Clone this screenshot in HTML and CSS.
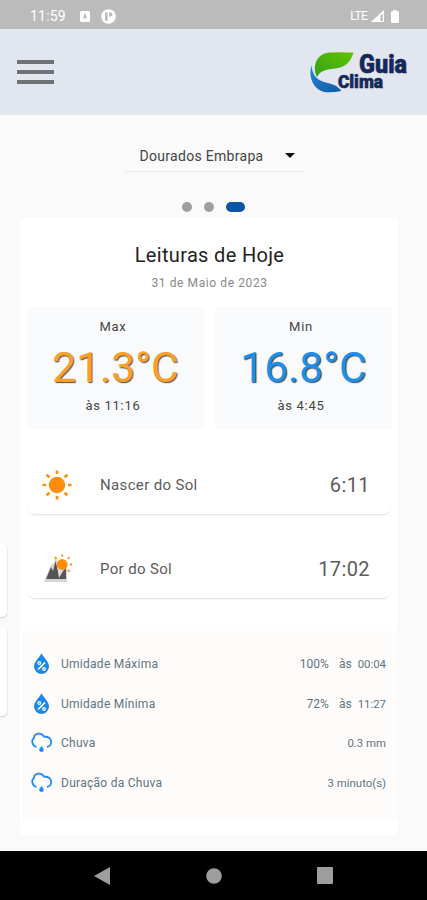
FILE: index.html
```
<!DOCTYPE html>
<html lang="pt-BR">
<head>
    <meta charset="UTF-8">
    <meta name="viewport" content="width=device-width, initial-scale=1.0">
    <title>Guia Clima</title>
    <link rel="stylesheet" href="styles.css">
</head>
<body>
    <div class="status-bar">
        <span class="clock">11:59</span>
        <svg class="status-app" width="10" height="11" viewBox="0 0 10 11">
            <rect width="10" height="11" rx="1.5" fill="#fff"/>
            <path d="M3.5 7.5L5 3.5l1.5 4M4 6.3h2" fill="none" stroke="#bbb" stroke-width="1.2"/>
        </svg>
        <svg class="status-p" width="15" height="15" viewBox="0 0 15 15">
            <circle cx="7.5" cy="7.5" r="7.3" fill="#fff"/>
            <path d="M4 3.5h2.5v8.5H4zM8 3.5h1.5a2 2 0 0 1 0 4H8z" fill="#bbb"/>
        </svg>
        <span class="lte">LTE</span>
        <svg class="signal" width="13" height="12" viewBox="0 0 13 12">
            <path d="M0 12L13 0v12z" fill="#fff"/>
            <path d="M9.5 5.5L11.8 3.4V11H9.5z" fill="#bbb"/>
        </svg>
        <svg class="battery" width="8" height="13" viewBox="0 0 8 13">
            <path d="M2.3 0h3.4v1.3H7q1 0 1 1V12q0 1-1 1H1q-1 0-1-1V2.3q0-1 1-1h1.3z" fill="#fff"/>
        </svg>
    </div>

    <header class="header">
        <div class="menu">
            <span></span>
            <span></span>
            <span></span>
        </div>
        <svg class="logo" width="104" height="60" viewBox="0 -8 104 60">
            <defs>
                <linearGradient id="leaf" x1="0" y1="1" x2="1" y2="0">
                    <stop offset="0" stop-color="#35a01c"/>
                    <stop offset="1" stop-color="#62c400"/>
                </linearGradient>
                <linearGradient id="water" x1="0" y1="0" x2="1" y2="1">
                    <stop offset="0" stop-color="#2b86cf"/>
                    <stop offset="1" stop-color="#0c5ba8"/>
                </linearGradient>
            </defs>
            <path d="M8 27C3 17 7 4 20 2.500Q25 2 44.500 2.500C42 12 36 17.500 26 18.500C16 19.500 11 21 8 27Z" fill="url(#leaf)"/>
            <path d="M2.500 15C-1 27 4 39 15 42Q22 43 32.500 41C27 34 22 34 15 32C6 29 3 23 2.500 15Z" fill="url(#water)"/>
            <text x="50" y="22.500" class="logo-guia" textLength="48" lengthAdjust="spacingAndGlyphs">Guia</text>
            <text x="29" y="37.500" class="logo-clima" textLength="45" lengthAdjust="spacingAndGlyphs">Clima</text>
        </svg>
    </header>

    <main class="content">
        <div class="station">
            <span>Dourados Embrapa</span>
            <svg width="10" height="5" viewBox="0 0 10 5"><path d="M0 0h10L5 5z" fill="#111"/></svg>
        </div>
        <div class="dots">
            <span class="dot"></span>
            <span class="dot"></span>
            <span class="dot active"></span>
        </div>

        <div class="carousel">
            <div class="previous">
                <div class="edge edge-small"></div>
                <div class="edge edge-large"></div>
            </div>
            <section class="slide">
                <h1 class="title">Leituras de Hoje</h1>
                <p class="date">31 de Maio de 2023</p>

                <div class="temps">
                    <div class="temp max">
                        <span class="temp-label">Max</span>
                        <strong>21.3°C</strong>
                        <span class="temp-time">às 11:16</span>
                    </div>
                    <div class="temp min">
                        <span class="temp-label">Min</span>
                        <strong>16.8°C</strong>
                        <span class="temp-time">às 4:45</span>
                    </div>
                </div>

                <div class="sun-row">
                    <svg width="30" height="30" viewBox="0 0 30 30">
                        <circle cx="15" cy="15" r="8.200" fill="#ff8c0a"/>
                        <path d="M15 .5v3.500M15 26v3.500M.5 15H4M26 15h3.500M4.600 4.600l2.800 2.800M22.600 22.600l2.800 2.800M4.600 25.400l2.800-2.800M22.600 7.400l2.800-2.800" stroke="#ff8c0a" stroke-width="2.600"/>
                    </svg>
                    <span class="sun-name">Nascer do Sol</span>
                    <span class="sun-time">6:11</span>
                </div>
                <div class="sun-row">
                    <svg width="30" height="30" viewBox="0 0 30 30">
                        <path d="M2 28L9 11l3-2 1-6 5 9 7 2v14z" fill="#d9d5d3"/>
                        <path d="M4 25l5-12 2 4 2.500-10 3.500 14 7-8v12z" fill="#555"/>
                        <path d="M15 10l2 14 4-7 3-3-5-3z" fill="#e2dfdd"/>
                        <path d="M20 25l4-8v8z" fill="#555"/>
                        <circle cx="20.200" cy="10.500" r="5.400" fill="#ff8c0a"/>
                        <path d="M20.200.5v2M25.800 4.800l1.700-1.700M28 10.500h2M25.800 16l1.700 1.700M14.600 4.800l-1.700-1.700" stroke="#ff8c0a" stroke-width="1.900"/>
                    </svg>
                    <span class="sun-name">Por do Sol</span>
                    <span class="sun-time">17:02</span>
                </div>

                <div class="details">
                    <div class="detail">
                        <svg width="22" height="22" viewBox="0 0 22 22">
                            <path d="M10.500.5C7.500 5.500 3 9 3 13.500a7.500 7.500 0 0 0 15 0C18 9 13.500 5.500 10.500.5z" fill="#1c88e5"/>
                            <path d="M14 9.500l-7 7" stroke="#fff" stroke-width="1.700"/>
                            <circle cx="8.300" cy="10" r="1.300" fill="none" stroke="#fff" stroke-width="1.200"/>
                            <circle cx="13" cy="16" r="1.300" fill="none" stroke="#fff" stroke-width="1.200"/>
                        </svg>
                        <span class="name">Umidade Máxima</span>
                        <span class="percent">100%</span>
                        <span class="as">às</span>
                        <span class="value">00:04</span>
                    </div>
                    <div class="detail">
                        <svg width="22" height="22" viewBox="0 0 22 22">
                            <path d="M10.500.5C7.500 5.500 3 9 3 13.500a7.500 7.500 0 0 0 15 0C18 9 13.500 5.500 10.500.5z" fill="#1c88e5"/>
                            <path d="M14 9.500l-7 7" stroke="#fff" stroke-width="1.700"/>
                            <circle cx="8.300" cy="10" r="1.300" fill="none" stroke="#fff" stroke-width="1.200"/>
                            <circle cx="13" cy="16" r="1.300" fill="none" stroke="#fff" stroke-width="1.200"/>
                        </svg>
                        <span class="name">Umidade Mínima</span>
                        <span class="percent">72%</span>
                        <span class="as">às</span>
                        <span class="value">11:27</span>
                    </div>
                    <div class="detail">
                        <svg width="22" height="22" viewBox="0 0 22 22">
                            <path d="M5.500 15C.5 13.500.3 7.500 3 6C3.500.8 10 .2 13 4.500C18.500 4.500 20.500 7.500 20.200 10.500C20 13 18.500 14.500 16 15" fill="none" stroke="#2488f5" stroke-width="1.800"/>
                            <path d="M10.500 14l2.200 3a2.300 2.300 0 1 1-4.400 0z" fill="#2488f5"/>
                        </svg>
                        <span class="name">Chuva</span>
                        <span class="value">0.3 mm</span>
                    </div>
                    <div class="detail">
                        <svg width="22" height="22" viewBox="0 0 22 22">
                            <path d="M5.500 15C.5 13.500.3 7.500 3 6C3.500.8 10 .2 13 4.500C18.500 4.500 20.500 7.500 20.200 10.500C20 13 18.500 14.500 16 15" fill="none" stroke="#2488f5" stroke-width="1.800"/>
                            <path d="M10.500 14l2.200 3a2.300 2.300 0 1 1-4.400 0z" fill="#2488f5"/>
                        </svg>
                        <span class="name">Duração da Chuva</span>
                        <span class="value">3 minuto(s)</span>
                    </div>
                </div>
            </section>
        </div>
    </main>

    <nav class="nav-bar">
        <svg width="16" height="18" viewBox="0 0 16 18"><path d="M0 9L16 0v18z" fill="#9e9e9e"/></svg>
        <svg width="16" height="16" viewBox="0 0 16 16"><circle cx="8" cy="8" r="7.800" fill="#9e9e9e"/></svg>
        <svg width="16" height="17" viewBox="0 0 16 17"><rect width="16" height="17" rx="1" fill="#9e9e9e"/></svg>
    </nav>
</body>
</html>
```
FILE: styles.css
```
* {
    box-sizing: border-box;
}
body {
    font-family: Roboto, "Liberation Sans", sans-serif;
    margin: 0;
    height: 900px;
    display: flex;
    flex-direction: column;
    background-color: #fafafa;
    overflow: hidden;
}
svg {
    display: block;
    flex: none;
}
.status-bar {
    height: 29px;
    padding: 3px 28px 0 30px;
    display: flex;
    align-items: center;
    background-color: #bbb;
    color: #fff;
}
.clock {
    width: 50px;
    font-size: 14px;
    letter-spacing: 0.2px;
}
.status-p {
    margin-left: 11px;
}
.lte {
    margin-left: auto;
    font-size: 12px;
    letter-spacing: -0.7px;
}
.signal {
    margin-left: 4px;
}
.battery {
    margin-left: 7px;
}
.header {
    height: 86px;
    padding: 0 14px 0 17px;
    display: flex;
    align-items: center;
    justify-content: space-between;
    background-color: #e1e6ef;
}
.menu {
    width: 37px;
    display: flex;
    flex-direction: column;
    gap: 6px;
}
.menu span {
    height: 4px;
    background-color: #707376;
}
.logo text {
    font-family: Roboto, sans-serif;
    font-weight: 900;
    fill: #16285a;
    stroke: #16285a;
    stroke-width: 0.6px;
}
.logo .logo-guia {
    font-size: 26px;
}
.logo .logo-clima {
    font-size: 18px;
}
.content {
    flex: 1;
    padding-top: 26px;
}
.station {
    width: 180px;
    height: 31px;
    margin: 0 auto;
    padding: 0 9px 1px 16px;
    display: flex;
    align-items: center;
    justify-content: space-between;
    border-bottom: 1px solid #ececec;
    font-size: 14px;
    letter-spacing: 0.3px;
    color: #444;
}
.dots {
    margin-top: 30px;
    height: 10px;
    display: flex;
    align-items: center;
    justify-content: center;
    gap: 12.5px;
}
.dot {
    width: 9.5px;
    height: 9.5px;
    border-radius: 5px;
    background-color: #9e9e9e;
}
.dot.active {
    width: 19px;
    background-color: #0a53a5;
}
.carousel {
    margin-top: 6px;
    display: flex;
    gap: 13px;
}
.previous {
    width: 7px;
    padding-top: 326px;
}
.edge {
    background-color: #fff;
    border-radius: 0 5px 5px 0;
    box-shadow: 0 1px 2px rgba(0, 0, 0, 0.2);
}
.edge-small {
    height: 73px;
}
.edge-large {
    height: 89px;
    margin-top: 10px;
}
.slide {
    width: 377px;
    height: 617px;
    padding: 0 5px 0 7px;
    background-color: #fff;
}
.title {
    margin: 0;
    padding-top: 24px;
    font-size: 20px;
    line-height: 26px;
    font-weight: 400;
    letter-spacing: 0.33px;
    text-align: center;
    color: #222;
}
.date {
    margin: 7px 0 0;
    font-size: 12px;
    line-height: 16px;
    letter-spacing: 0.6px;
    text-align: center;
    color: #888;
}
.temps {
    margin-top: 15px;
    display: flex;
    gap: 11px;
}
.temp {
    flex: 1;
    height: 124px;
    padding-top: 12px;
    display: flex;
    flex-direction: column;
    align-items: center;
    background-color: #f8fafc;
    border-radius: 5px;
    font-size: 13px;
    color: #444;
}
.temp span {
    line-height: 18px;
    padding-right: 5px;
    letter-spacing: 0.7px;
}
.temp strong {
    font-size: 42.5px;
    line-height: 50px;
    margin: 7px 0 4px;
    font-weight: 400;
    text-shadow: 1px 1px 1px rgba(0, 0, 0, 0.7);
}
.max strong {
    color: #f9a02a;
}
.min strong {
    color: #1c8fee;
}
.sun-row {
    width: 364px;
    height: 58px;
    margin-top: 26px;
    padding: 0 21px 0 15px;
    display: flex;
    align-items: center;
    border-radius: 8px;
    box-shadow: 0 2px 2px -1px rgba(0, 0, 0, 0.13);
    color: #5c5c5c;
}
.sun-name {
    margin-left: 28px;
    font-size: 15px;
    letter-spacing: 0.35px;
}
.sun-time {
    margin-left: auto;
    font-size: 20px;
    letter-spacing: 0.4px;
}
.details {
    margin: 33px -5px 0 -5px;
    height: 189px;
    padding: 13px 11px 0 9px;
    background-color: #fdfcfb;
    color: #61737f;
    font-size: 12px;
}
.detail {
    height: 39.8px;
    display: flex;
    align-items: center;
}
.name {
    margin-left: 8px;
    margin-right: auto;
    letter-spacing: 0.27px;
}
.as {
    margin-left: 10px;
}
.value {
    font-size: 11.4px;
}
.as + .value {
    margin-left: 6px;
}
.nav-bar {
    height: 49px;
    padding: 0 94px;
    display: flex;
    align-items: center;
    justify-content: space-between;
    background-color: #000;
}
```
